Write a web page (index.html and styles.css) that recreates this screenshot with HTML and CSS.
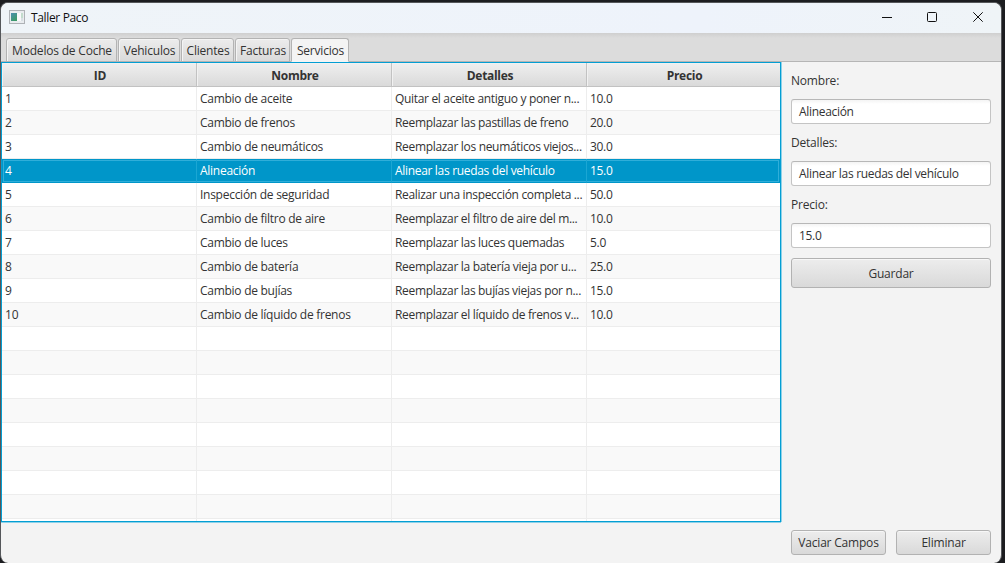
FILE: index.html
```html
<!DOCTYPE html>
<html lang="es">
<head>
<meta charset="utf-8">
<title>Taller Paco</title>
<link rel="stylesheet" href="styles.css">
</head>
<body>
<div class="window">
  <header class="titlebar">
    <svg class="app-icon" width="16" height="14" viewBox="0 0 16 14">
      <defs><linearGradient id="g" x1="0" y1="0" x2="0.6" y2="1"><stop offset="0" stop-color="#4b8fb0"/><stop offset="1" stop-color="#3d9a68"/></linearGradient></defs>
      <rect x="0.5" y="0.5" width="15" height="13" fill="#e9ecef" stroke="#aeb2b6"/>
      <rect x="2" y="3" width="6" height="8" fill="url(#g)"/>
      <rect x="8" y="3" width="4" height="8" fill="#f8f9fa"/>
      <rect x="12" y="3" width="2" height="5" fill="#c3dccd"/>
      <rect x="12" y="8" width="2" height="3" fill="#d8dfe3"/>
    </svg>
    <span class="title">Taller Paco</span>
    <svg class="controls" width="104" height="12" viewBox="0 0 104 12" fill="none" stroke="#111" stroke-width="1">
      <path d="M0 5.500H10"/>
      <rect x="45.5" y="0.5" width="9" height="9" rx="1"/>
      <path d="M91.300 0.300l9.400 9.400M100.700 0.300l-9.400 9.400"/>
    </svg>
  </header>
  <nav class="tabs">
    <div class="tab t1"><span>Modelos de Coche</span></div>
    <div class="tab t2"><span>Vehiculos</span></div>
    <div class="tab t3"><span>Clientes</span></div>
    <div class="tab t4"><span>Facturas</span></div>
    <div class="tab t5 active"><span>Servicios</span></div>
  </nav>
  <main class="content">
    <section class="table">
      <div class="row head"><div>ID</div><div>Nombre</div><div>Detalles</div><div>Precio</div></div>
      <div class="row"><div>1</div><div>Cambio de aceite</div><div>Quitar el aceite antiguo y poner n...</div><div>10.0</div></div>
      <div class="row"><div>2</div><div>Cambio de frenos</div><div>Reemplazar las pastillas de freno</div><div>20.0</div></div>
      <div class="row"><div>3</div><div>Cambio de neumáticos</div><div>Reemplazar los neumáticos viejos...</div><div>30.0</div></div>
      <div class="row selected"><div>4</div><div>Alineación</div><div>Alinear las ruedas del vehículo</div><div>15.0</div></div>
      <div class="row"><div>5</div><div>Inspección de seguridad</div><div>Realizar una inspección completa ...</div><div>50.0</div></div>
      <div class="row"><div>6</div><div>Cambio de filtro de aire</div><div>Reemplazar el filtro de aire del m...</div><div>10.0</div></div>
      <div class="row"><div>7</div><div>Cambio de luces</div><div>Reemplazar las luces quemadas</div><div>5.0</div></div>
      <div class="row"><div>8</div><div>Cambio de batería</div><div>Reemplazar la batería vieja por u...</div><div>25.0</div></div>
      <div class="row"><div>9</div><div>Cambio de bujías</div><div>Reemplazar las bujías viejas por n...</div><div>15.0</div></div>
      <div class="row"><div>10</div><div>Cambio de líquido de frenos</div><div>Reemplazar el líquido de frenos v...</div><div>10.0</div></div>
      <div class="row"><div></div><div></div><div></div><div></div></div>
      <div class="row"><div></div><div></div><div></div><div></div></div>
      <div class="row"><div></div><div></div><div></div><div></div></div>
      <div class="row"><div></div><div></div><div></div><div></div></div>
      <div class="row"><div></div><div></div><div></div><div></div></div>
      <div class="row"><div></div><div></div><div></div><div></div></div>
      <div class="row"><div></div><div></div><div></div><div></div></div>
      <div class="row"><div></div><div></div><div></div><div></div></div>
      <div class="row"><div></div><div></div><div></div><div></div></div>
    </section>
    <aside class="form">
      <div class="label">Nombre:</div>
      <div class="field">Alineación</div>
      <div class="label">Detalles:</div>
      <div class="field">Alinear las ruedas del vehículo</div>
      <div class="label">Precio:</div>
      <div class="field">15.0</div>
      <div class="button save">Guardar</div>
      <div class="actions">
        <div class="button">Vaciar Campos</div>
        <div class="button">Eliminar</div>
      </div>
    </aside>
  </main>
</div>
</body>
</html>
```
FILE: styles.css
```css
* { box-sizing: border-box; }
body {
  margin: 0;
  width: 1005px;
  height: 563px;
  overflow: hidden;
  padding: 2px 3px 0 0;
  background: #1c1d20;
  font-family: "Open Sans", "Noto Sans", sans-serif;
  font-size: 12px;
  letter-spacing: -0.2px;
  color: #333;
  white-space: nowrap;
}
.window {
  height: 561px;
  display: flex;
  flex-direction: column;
  background: #f3f3f3;
  border: 1px solid #55575a;
  border-bottom: 0;
  border-radius: 8px;
  overflow: hidden;
}
.titlebar {
  height: 30px;
  display: flex;
  align-items: center;
  padding: 0 18px 2px 8px;
  background: linear-gradient(90deg, #eff4f8, #eef3fb 70%, #eff4f7);
  color: #111;
}
.title { margin-left: 6px; flex: 1; letter-spacing: -0.35px; padding-top: 1px; }
.controls { margin-right: -3px; margin-top: 2px; }
.tabs {
  height: 29px;
  display: flex;
  align-items: flex-end;
  gap: 1px;
  padding-left: 5px;
  background: linear-gradient(#cfcfcf, #dcdcdc 5px);
  box-shadow: inset 0 -1px #b5b5b5;
}
.tab {
  height: 24px;
  display: flex;
  align-items: center;
  justify-content: center;
  padding: 1px 0 0 1px;
  border: 1px solid #b3b3b3;
  border-radius: 3px 3px 0 0;
  background: linear-gradient(#ececec, #dadada);
  box-shadow: inset 1px 1px #f4f4f4;
}
.t1 { width: 111px; }
.t2 { width: 62px; }
.t3 { width: 53px; }
.t4 { width: 55px; }
.t5 { width: 58px; }
.tab.active { background: #f4f4f4; border-bottom-color: #f4f4f4; }
.content { flex: 1; display: flex; }
.table {
  width: 780px;
  height: 460px;
  border: 1px solid #039ed3;
  box-shadow: 0 1px #8ed1e8, 1px 0 #8ed1e8;
  background: #fff;
  overflow: hidden;
}
.row {
  display: grid;
  grid-template-columns: 195px 195px 195px 193px;
  height: 24px;
  background: #fff;
}
.row > div {
  height: 24px;
  padding-left: 3px;
  line-height: 24px;
  border-right: 1px solid #ededed;
  border-bottom: 1px solid #ededed;
  overflow: hidden;
}
.row > div:nth-child(2) { letter-spacing: -0.27px; }
.row > div:nth-child(3) { letter-spacing: -0.32px; }
.row > div:last-child { border-right: 0; letter-spacing: -0.3px; }
.row:nth-child(odd) { background: #f9f9f9; }
.row.head { height: 24px; background: linear-gradient(#efefef, #d9d9d9); }
.row.head > div {
  padding: 1px 0 0 2px;
  line-height: 23px;
  text-align: center;
  font-weight: 700;
  letter-spacing: -0.3px;
  border-color: #c2c2c2;
  box-shadow: inset 1px 1px #f1f1f1;
}
.row.selected {
  background: #0096c9;
  color: #fff;
  box-shadow: inset 0 0 0 1px #0096c9, inset 0 0 0 2px #30aed9;
}
.row.selected > div { border-right-color: #1ba6d3; border-bottom-color: transparent; }
.form {
  flex: 1;
  display: flex;
  flex-direction: column;
  padding: 10px 10px 8px;
}
.label { height: 17px; line-height: 17px; margin-bottom: 10px; }
.field {
  height: 25px;
  line-height: 23px;
  padding-left: 7px;
  margin-bottom: 10px;
  letter-spacing: -0.32px;
  border: 1px solid #c4c4c4;
  border-top-color: #b7b7b7;
  border-radius: 3px;
  background: linear-gradient(#f4f4f4, #fff 4px);
}
.button {
  height: 25px;
  display: flex;
  align-items: center;
  justify-content: center;
  border: 1px solid #b2b2b2;
  border-radius: 3px;
  background: linear-gradient(#ededed, #d9d9d9);
  box-shadow: inset 0 1px #f7f7f7;
}
.save { height: 30px; }
.actions {
  margin-top: auto;
  display: grid;
  grid-template-columns: 95px 95px;
  gap: 10px;
}
```
